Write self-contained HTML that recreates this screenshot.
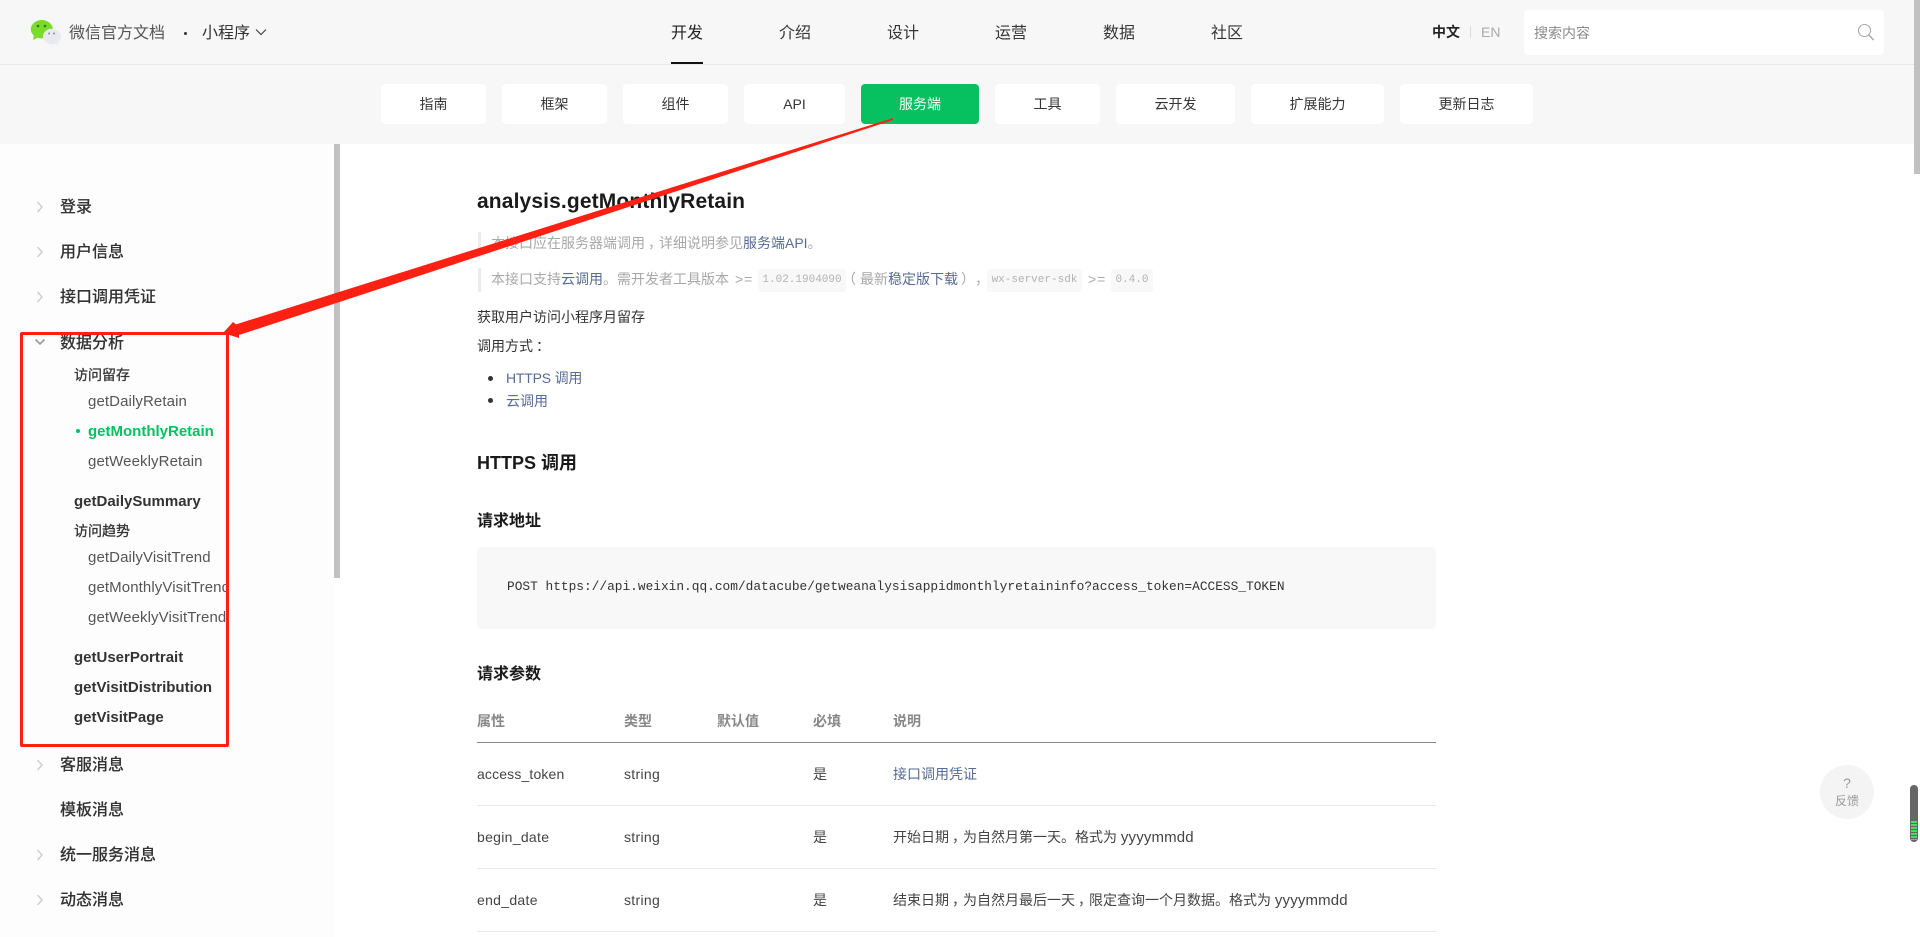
<!DOCTYPE html>
<html lang="zh-CN">
<head>
<meta charset="utf-8">
<title>analysis.getMonthlyRetain</title>
<style>
*{box-sizing:border-box}
html,body{margin:0;padding:0;width:1920px;height:937px;overflow:hidden;background:#fff}
body{position:relative;font-family:"Liberation Sans","Noto Sans CJK SC",sans-serif;font-size:14px;color:#353535}
.t{position:absolute;white-space:nowrap;line-height:20px;height:20px}
.b{position:absolute;display:block}
.nav{font-size:16px;color:#353535;top:24px}
.tab{position:absolute;top:84px;height:40px;line-height:40px;background:#fff;border-radius:4px;text-align:center;font-size:14px;color:#353535}
.s1{left:60px;font-size:16px;color:#333;font-weight:500;-webkit-text-stroke:.1px #333}
.s2{left:74px;font-size:15px;font-weight:700;color:#333}
.s2c{left:74px;font-size:14px;color:#333;-webkit-text-stroke:.3px #333}
.s3{left:88px;font-size:15px;color:#555;letter-spacing:.1px}
.g{color:#a8a8a8}
.a{color:#576b95}
.p{position:relative;left:3px}
.c{position:absolute;top:269px;height:23px;line-height:23px;background:#f8f8f8;border-radius:3px;font-family:"Liberation Mono",monospace;font-size:11px;color:#b2b2b2;text-align:center}
.h{font-weight:700;color:#888}
.r{color:#444}
.y{font-size:15px;letter-spacing:.15px}
.ge{letter-spacing:1px}
.ln{position:absolute;left:477px;width:959px;height:1px;background:#e6e6e6}
</style>
</head>
<body>
<!-- header background -->
<div class="b" style="left:0;top:0;width:1920px;height:144px;background:#f7f7f7"></div>
<div class="b" style="left:0;top:64px;width:1920px;height:1px;background:#e7e7e7"></div>

<!-- logo -->
<svg class="b" style="left:28px;top:18px" width="36" height="30" viewBox="28 18 36 30">
  <ellipse cx="41.8" cy="29.2" rx="11" ry="9.2" fill="#7bdb2c"/>
  <path d="M34 35 L33 40 L39 37 Z" fill="#7bdb2c"/>
  <circle cx="38" cy="26" r="1.3" fill="#2f7a12"/>
  <circle cx="45" cy="26" r="1.3" fill="#2f7a12"/>
  <ellipse cx="52" cy="36.5" rx="9" ry="7.8" fill="#e8eaf0"/>
  <path d="M55 42 L58 46 L58 40 Z" fill="#e8eaf0"/>
  <circle cx="49" cy="33.5" r="1" fill="#8a8f99"/>
  <circle cx="54" cy="33.5" r="1" fill="#8a8f99"/>
</svg>
<div class="t" style="left:69px;top:24px;font-size:16px;color:#555">微信官方文档</div>
<div class="b" style="left:184px;top:32px;width:3px;height:3px;border-radius:50%;background:#333"></div>
<div class="t" style="left:202px;top:24px;font-size:16px;color:#333">小程序</div>
<svg class="b" style="left:255px;top:28px" width="12" height="9" viewBox="0 0 12 9"><path d="M1 1.5 L6 6.5 L11 1.5" fill="none" stroke="#444" stroke-width="1.2"/></svg>

<!-- top nav -->
<div class="t nav" style="left:671px;color:#222">开发</div>
<div class="b" style="left:671px;top:62px;width:32px;height:2px;background:#111"></div>
<div class="t nav" style="left:779px">介绍</div>
<div class="t nav" style="left:887px">设计</div>
<div class="t nav" style="left:995px">运营</div>
<div class="t nav" style="left:1103px">数据</div>
<div class="t nav" style="left:1211px">社区</div>

<!-- lang + search -->
<div class="t" style="left:1432px;top:22px;font-size:14px;font-weight:700;color:#222">中文</div>
<div class="b" style="left:1470px;top:26px;width:1px;height:12px;background:#ddd"></div>
<div class="t" style="left:1481px;top:22px;font-size:14px;color:#aaa">EN</div>
<div class="b" style="left:1524px;top:10px;width:360px;height:45px;background:#fff;border-radius:4px"></div>
<div class="t" style="left:1534px;top:23px;font-size:14px;color:#8a8a8a">搜索内容</div>
<svg class="b" style="left:1857px;top:23px" width="18" height="18" viewBox="0 0 18 18"><circle cx="7.5" cy="7.5" r="6" fill="none" stroke="#a8a8a8" stroke-width="1.1"/><path d="M11.8 12 L16.5 17" stroke="#a8a8a8" stroke-width="1.5" fill="none"/></svg>

<!-- sub tabs -->
<div class="tab" style="left:381px;width:105px">指南</div>
<div class="tab" style="left:502px;width:105px">框架</div>
<div class="tab" style="left:623px;width:105px">组件</div>
<div class="tab" style="left:744px;width:101px">API</div>
<div class="tab" style="left:861px;width:118px;background:#07c160;color:#fff">服务端</div>
<div class="tab" style="left:995px;width:105px">工具</div>
<div class="tab" style="left:1116px;width:119px">云开发</div>
<div class="tab" style="left:1251px;width:133px">扩展能力</div>
<div class="tab" style="left:1400px;width:133px">更新日志</div>

<!-- page scrollbar -->
<div class="b" style="left:1914px;top:0;width:6px;height:174px;background:#c1c1c1"></div>

<!-- sidebar -->
<div class="b" style="left:0;top:144px;width:334px;height:793px;background:#fdfdfd"></div>
<div class="b" style="left:334px;top:144px;width:6px;height:434px;background:#c1c1c1"></div>

<svg class="b" style="left:0;top:144px" width="60" height="793" viewBox="0 144 60 793">
  <g fill="none" stroke="#cfcfcf" stroke-width="1.5">
    <path d="M37.5 202 L42 207 L37.5 212"/>
    <path d="M37.5 247 L42 252 L37.5 257"/>
    <path d="M37.5 292 L42 297 L37.5 302"/>
    <path d="M37.5 760 L42 765 L37.5 770"/>
    <path d="M37.5 850 L42 855 L37.5 860"/>
    <path d="M37.5 895 L42 900 L37.5 905"/>
  </g>
  <path d="M35.5 339.5 L40 344 L44.5 339.5" fill="none" stroke="#999" stroke-width="1.6"/>
</svg>

<div class="t s1" style="top:198px">登录</div>
<div class="t s1" style="top:243px">用户信息</div>
<div class="t s1" style="top:288px">接口调用凭证</div>
<div class="t s1" style="top:334px">数据分析</div>
<div class="t s2c" style="top:365px">访问留存</div>
<div class="t s3" style="top:392px">getDailyRetain</div>
<div class="b" style="left:76px;top:429px;width:4px;height:4px;border-radius:50%;background:#07c160"></div>
<div class="t s3" style="top:422px;font-weight:700;color:#07c160;letter-spacing:0">getMonthlyRetain</div>
<div class="t s3" style="top:452px">getWeeklyRetain</div>
<div class="t s2" style="top:492px">getDailySummary</div>
<div class="t s2c" style="top:521px">访问趋势</div>
<div class="t s3" style="top:548px">getDailyVisitTrend</div>
<div class="t s3" style="top:578px">getMonthlyVisitTrend</div>
<div class="t s3" style="top:608px">getWeeklyVisitTrend</div>
<div class="t s2" style="top:648px">getUserPortrait</div>
<div class="t s2" style="top:678px">getVisitDistribution</div>
<div class="t s2" style="top:708px">getVisitPage</div>
<div class="t s1" style="top:756px">客服消息</div>
<div class="t s1" style="top:801px">模板消息</div>
<div class="t s1" style="top:846px">统一服务消息</div>
<div class="t s1" style="top:891px">动态消息</div>

<!-- content -->
<div class="t" style="left:477px;top:190px;height:24px;line-height:24px;font-size:21px;font-weight:700;color:#1a1a1a;letter-spacing:.13px">analysis.getMonthlyRetain</div>

<div class="b" style="left:478px;top:232px;width:3px;height:25px;background:#ececec"></div>
<div class="t g" style="left:491px;top:233px">本接口应在服务器端调用<span class="p">，</span>详细说明参见<span class="a">服务端API</span>。</div>

<div class="b" style="left:478px;top:268px;width:3px;height:24px;background:#ececec"></div>
<div class="t g" style="left:491px;top:269px">本接口支持<span class="a">云调用</span>。需开发者工具版本</div>
<div class="t g ge" style="left:735px;top:269px">&gt;=</div>
<div class="c" style="left:758px;width:88px">1.02.1904090</div>
<div class="t g" style="left:842px;top:269px">（</div>
<div class="t g" style="left:860px;top:269px">最新<span class="a">稳定版下载</span></div>
<div class="t g" style="left:961px;top:269px">）</div>
<div class="t g" style="left:975px;top:269px">，</div>
<div class="c" style="left:987px;width:95px">wx-server-sdk</div>
<div class="t g ge" style="left:1088px;top:269px">&gt;=</div>
<div class="c" style="left:1111px;width:42px">0.4.0</div>

<div class="t" style="left:477px;top:307px;color:#333">获取用户访问小程序月留存</div>
<div class="t" style="left:477px;top:336px;color:#333">调用方式<span class="p">：</span></div>
<div class="b" style="left:488px;top:376px;width:5px;height:5px;border-radius:50%;background:#333"></div>
<div class="t a" style="left:506px;top:368px;letter-spacing:-.2px">HTTPS 调用</div>
<div class="b" style="left:488px;top:398px;width:5px;height:5px;border-radius:50%;background:#333"></div>
<div class="t a" style="left:506px;top:391px">云调用</div>

<div class="t" style="left:477px;top:453px;font-size:18px;font-weight:700;color:#1a1a1a">HTTPS 调用</div>
<div class="t" style="left:477px;top:512px;font-size:16px;font-weight:700;color:#1a1a1a">请求地址</div>

<div class="b" style="left:477px;top:547px;width:959px;height:82px;background:#f8f8f8;border-radius:4px"></div>
<div class="t" style="left:507px;top:577px;font-family:'Liberation Mono',monospace;font-size:12.83px;color:#333">POST https://api.weixin.qq.com/datacube/getweanalysisappidmonthlyretaininfo?access_token=ACCESS_TOKEN</div>

<div class="t" style="left:477px;top:665px;font-size:16px;font-weight:700;color:#1a1a1a">请求参数</div>

<div class="t h" style="left:477px;top:711px">属性</div>
<div class="t h" style="left:624px;top:711px">类型</div>
<div class="t h" style="left:717px;top:711px">默认值</div>
<div class="t h" style="left:813px;top:711px">必填</div>
<div class="t h" style="left:893px;top:711px">说明</div>
<div class="ln" style="top:742px;background:#888"></div>

<div class="t r" style="left:477px;top:764px;letter-spacing:.15px">access_token</div>
<div class="t r" style="left:624px;top:764px;letter-spacing:.3px">string</div>
<div class="t r" style="left:813px;top:764px">是</div>
<div class="t a" style="left:893px;top:764px">接口调用凭证</div>
<div class="ln" style="top:805px"></div>

<div class="t r" style="left:477px;top:827px;letter-spacing:.3px">begin_date</div>
<div class="t r" style="left:624px;top:827px;letter-spacing:.3px">string</div>
<div class="t r" style="left:813px;top:827px">是</div>
<div class="t r" style="left:893px;top:827px">开始日期<span class="p">，</span>为自然月第一天。格式为 <span class="y">yyyymmdd</span></div>
<div class="ln" style="top:868px"></div>

<div class="t r" style="left:477px;top:890px;letter-spacing:.3px">end_date</div>
<div class="t r" style="left:624px;top:890px;letter-spacing:.3px">string</div>
<div class="t r" style="left:813px;top:890px">是</div>
<div class="t r" style="left:893px;top:890px">结束日期<span class="p">，</span>为自然月最后一天<span class="p">，</span>限定查询一个月数据。格式为 <span class="y">yyyymmdd</span></div>
<div class="ln" style="top:931px"></div>

<!-- feedback -->
<div class="b" style="left:1820px;top:765px;width:54px;height:54px;border-radius:50%;background:#f4f4f4"></div>
<div class="t" style="left:1820px;width:54px;top:773px;text-align:center;font-size:14px;color:#999">?</div>
<div class="t" style="left:1820px;width:54px;top:791px;text-align:center;font-size:12px;color:#999">反馈</div>

<!-- side widget -->
<div class="b" style="left:1910px;top:785px;width:8px;height:57px;background:#666;border-radius:4px"></div>
<svg class="b" style="left:1911px;top:821px" width="6" height="20" viewBox="0 0 6 20">
  <g fill="#4cd964">
    <rect y="0" width="6" height="2"/><rect y="3" width="6" height="2"/><rect y="6" width="6" height="2"/>
    <rect y="9" width="6" height="2"/><rect y="12" width="6" height="2"/><rect y="15" width="6" height="2"/><rect y="18" width="6" height="1"/>
  </g>
</svg>

<!-- annotation: red box + arrow -->
<div class="b" style="left:20px;top:332px;width:209px;height:415px;border:3px solid #ff2014;border-radius:2px"></div>
<svg class="b" style="left:0;top:0" width="1920" height="937" viewBox="0 0 1920 937">
  <polygon points="893,118 893,120 239,335 239,338 223,333 233,322 236,324.4" fill="#ff2014"/>
</svg>
</body>
</html>
